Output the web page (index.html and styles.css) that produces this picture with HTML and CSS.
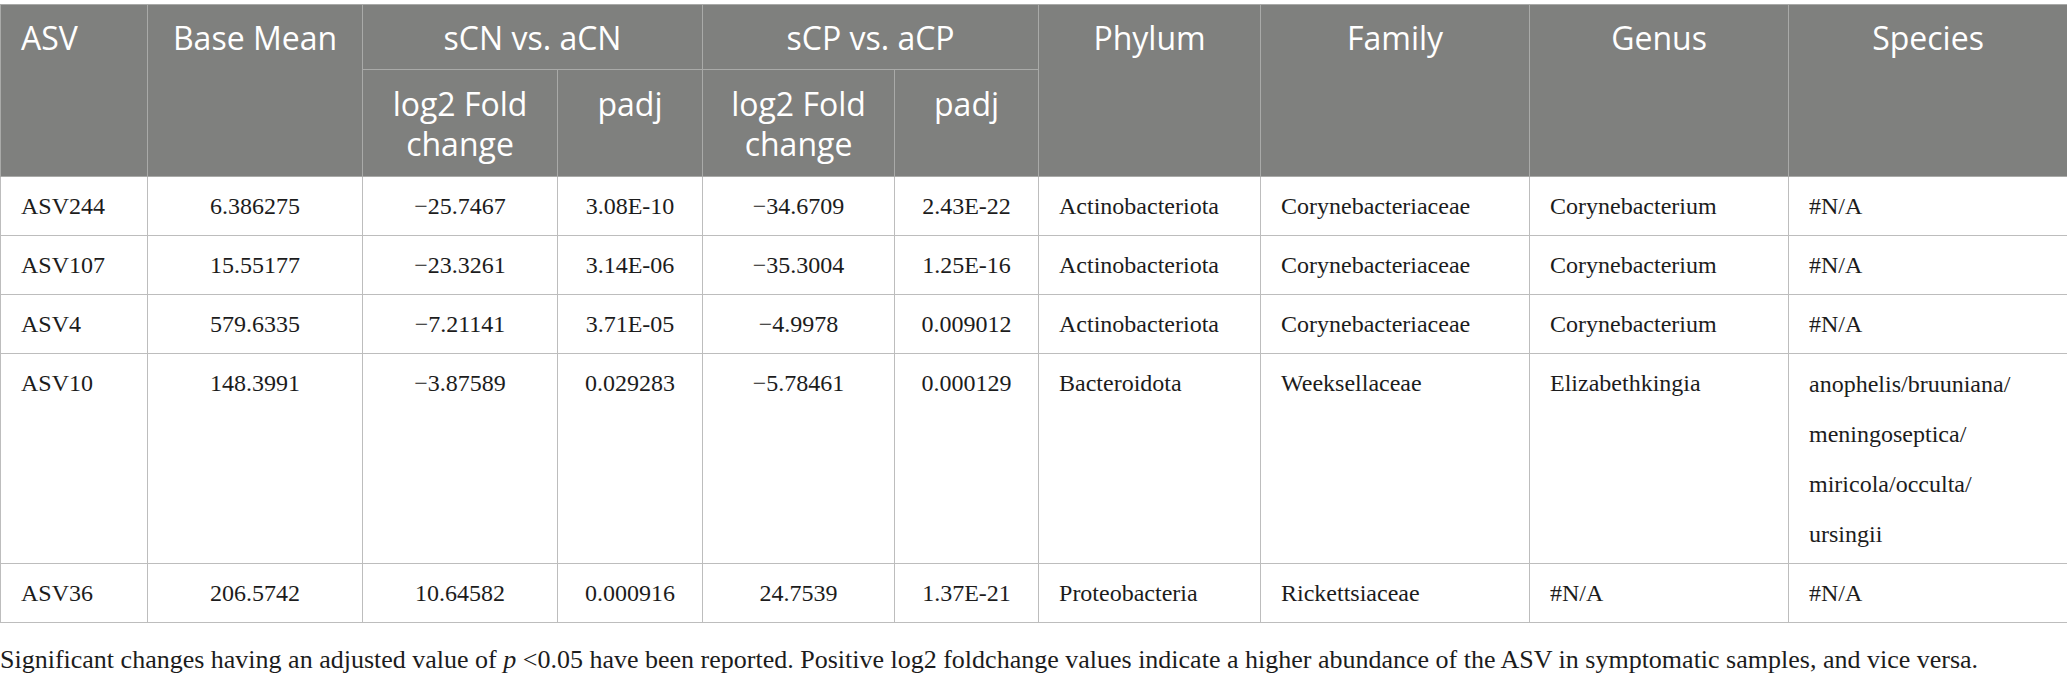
FILE: index.html
```html
<!DOCTYPE html>
<html>
<head>
<meta charset="utf-8">
<link rel="stylesheet" href="styles.css">
</head>
<body>
<div class="page">
<table class="data">
<colgroup>
<col class="c1"><col class="c2"><col class="c3"><col class="c4"><col class="c5"><col class="c6"><col class="c7"><col class="c8"><col class="c9"><col class="c10">
</colgroup>
<thead>
<tr class="h1">
<th rowspan="2" class="left">ASV</th>
<th rowspan="2">Base Mean</th>
<th colspan="2">sCN vs. aCN</th>
<th colspan="2">sCP vs. aCP</th>
<th rowspan="2">Phylum</th>
<th rowspan="2">Family</th>
<th rowspan="2">Genus</th>
<th rowspan="2">Species</th>
</tr>
<tr class="h2">
<th>log2 Fold change</th>
<th>padj</th>
<th>log2 Fold change</th>
<th>padj</th>
</tr>
</thead>
<tbody>
<tr>
<td class="left">ASV244</td><td>6.386275</td><td>−25.7467</td><td>3.08E-10</td><td>−34.6709</td><td>2.43E-22</td><td class="left">Actinobacteriota</td><td class="left">Corynebacteriaceae</td><td class="left">Corynebacterium</td><td class="left">#N/A</td>
</tr>
<tr>
<td class="left">ASV107</td><td>15.55177</td><td>−23.3261</td><td>3.14E-06</td><td>−35.3004</td><td>1.25E-16</td><td class="left">Actinobacteriota</td><td class="left">Corynebacteriaceae</td><td class="left">Corynebacterium</td><td class="left">#N/A</td>
</tr>
<tr>
<td class="left">ASV4</td><td>579.6335</td><td>−7.21141</td><td>3.71E-05</td><td>−4.9978</td><td>0.009012</td><td class="left">Actinobacteriota</td><td class="left">Corynebacteriaceae</td><td class="left">Corynebacterium</td><td class="left">#N/A</td>
</tr>
<tr>
<td class="left">ASV10</td><td>148.3991</td><td>−3.87589</td><td>0.029283</td><td>−5.78461</td><td>0.000129</td><td class="left">Bacteroidota</td><td class="left">Weeksellaceae</td><td class="left">Elizabethkingia</td><td class="left multi">anophelis/bruuniana/<br>meningoseptica/<br>miricola/occulta/<br>ursingii</td>
</tr>
<tr>
<td class="left">ASV36</td><td>206.5742</td><td>10.64582</td><td>0.000916</td><td>24.7539</td><td>1.37E-21</td><td class="left">Proteobacteria</td><td class="left">Rickettsiaceae</td><td class="left">#N/A</td><td class="left">#N/A</td>
</tr>
</tbody>
</table>
<p class="note">Significant changes having an adjusted value of <i>p</i> &lt;0.05 have been reported. Positive log2 foldchange values indicate a higher abundance of the ASV in symptomatic samples, and vice versa.</p>
</div>
</body>
</html>
```
FILE: styles.css
```css
html, body {
  margin: 0;
  padding: 0;
  background: #ffffff;
}
.page {
  padding-top: 4px;
  width: 2067px;
}
.data {
  width: 2067px;
  border-collapse: collapse;
  table-layout: fixed;
}
.c1 { width: 147px; }
.c2 { width: 215px; }
.c3 { width: 195px; }
.c4 { width: 145px; }
.c5 { width: 192px; }
.c6 { width: 144px; }
.c7 { width: 222px; }
.c8 { width: 269px; }
.c9 { width: 259px; }
.c10 { width: 279px; }

.data th {
  background: #7f807e;
  color: #ffffff;
  font-family: "Open Sans", "Noto Sans", sans-serif;
  font-weight: 400;
  font-size: 32px;
  line-height: 40px;
  text-align: center;
  vertical-align: top;
  border: 1px solid #a9aaa8;
  padding: 13px 20px 11px;
}
.data tr.h2 th {
  padding: 14px 8px 12px;
}
.data td {
  font-family: "Liberation Serif", "Times New Roman", serif;
  font-size: 24px;
  line-height: 49px;
  color: #1c1c1c;
  text-align: center;
  vertical-align: top;
  border: 1px solid #bdbdbd;
  padding: 5px 20px 4px;
}
.data td.multi {
  line-height: 50px;
}
.data th.left, .data td.left {
  text-align: left;
}
.note {
  margin: 22px 0 0;
  font-family: "Liberation Serif", "Times New Roman", serif;
  font-size: 26px;
  line-height: 30px;
  color: #1c1c1c;
}
```
